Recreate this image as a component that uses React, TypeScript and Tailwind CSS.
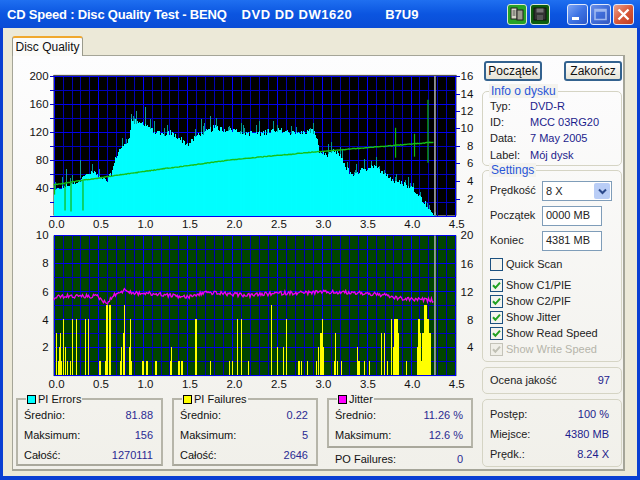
import React from "react";

const lerp = (pts: number[][], g: number) => {
  for (let i = 0; i < pts.length - 1; i++) {
    if (g >= pts[i][0] && g <= pts[i + 1][0]) {
      const t = (g - pts[i][0]) / (pts[i + 1][0] - pts[i][0]);
      return pts[i][1] + (pts[i + 1][1] - pts[i][1]) * t;
    }
  }
  return pts[pts.length - 1][1];
};
let seed = 12345;
const rnd = () => {
  seed = (seed * 1103515245 + 12345) & 0x7fffffff;
  return seed / 0x7fffffff;
};
const X0 = 53;
const PX = 89.6;
const gx = (g: number) => X0 + g * PX;

const env = [
  [0, 36], [0.1, 42], [0.2, 46], [0.3, 50], [0.32, 58], [0.4, 60], [0.45, 65], [0.5, 57], [0.6, 50], [0.65, 62],
  [0.7, 85], [0.75, 98], [0.8, 102], [0.85, 115], [0.87, 138], [0.95, 132], [1.0, 133], [1.05, 130], [1.1, 124],
  [1.2, 116], [1.3, 120], [1.4, 112], [1.5, 103], [1.55, 108], [1.6, 116], [1.7, 120], [1.8, 127], [1.9, 124],
  [2.0, 124], [2.1, 120], [2.3, 118], [2.5, 124], [2.7, 118], [2.9, 122], [2.93, 118], [2.97, 92], [3.05, 88],
  [3.12, 92], [3.2, 88], [3.25, 72], [3.35, 58], [3.45, 66], [3.55, 72], [3.7, 62], [3.8, 50], [3.9, 47], [4.0, 42],
  [4.1, 29], [4.2, 12], [4.26, 0],
];
const cy = (v: number) => 216 - v * 0.7;
let cyanPath = "";
let tealPath = "";
for (let x = 53; x <= 436; x++) {
  const g = (x - X0) / PX;
  const e = lerp(env, g);
  const amp = g > 4.2 ? 0 : g < 0.6 ? 5 : 8;
  const v = Math.max(0, e + (rnd() - 0.55) * amp);
  const r = rnd();
  const s = r > 0.84 ? v + 4 + rnd() * 11 * (g > 4 ? 0.3 : 1) : v;
  if (s > v) tealPath += `M${x + 0.5} ${Math.round(cy(s))}V216`;
  cyanPath += `M${x + 0.5} ${Math.round(cy(v))}V216`;
}
const teal2 = [[0.13, 67], [1.03, 156], [0.3, 79], [1.75, 142], [1.65, 138], [0.93, 150], [0.87, 145]];

const speedPts = [[0.0, 44], [0.3, 50], [1, 63], [2, 80], [3, 92], [4.25, 105]];
const jitterPts = [
  [0, 300], [0.02, 298], [0.1, 297], [0.5, 297], [0.55, 302], [0.6, 303], [0.65, 299], [0.7, 294], [0.8, 291],
  [0.9, 294], [1.0, 294], [1.2, 295], [1.5, 298], [1.7, 293], [2, 295], [2.2, 296], [2.5, 294], [3.0, 293],
  [3.2, 293], [3.5, 294], [3.7, 296], [3.85, 299], [4.0, 300], [4.25, 301],
];
let speedLine = "";
let jitterLine = "";
for (let x = 53; x <= 434; x += 1) {
  const g = (x - X0) / PX;
  speedLine += `${x},${(cy(lerp(speedPts, g)) + (rnd() - 0.5) * 0.6).toFixed(1)} `;
  jitterLine += `${x},${(lerp(jitterPts, g) + (rnd() - 0.5) * 4).toFixed(1)} `;
}

// yellow failure bars: [x, units, width]
const bars: number[][] = [
  [55, 3, 1], [57, 1, 1], [58, 2, 1], [59, 3, 1], [60, 1, 1], [62, 4, 1], [64, 2, 1], [66, 1, 1], [69, 1, 1], [71, 4, 1],
  [75, 4, 1], [85, 4, 1], [88, 4, 1], [99, 1, 2], [105, 1, 1], [106, 5, 2], [109, 5, 2], [120, 1, 1], [121, 2, 1], [123, 3, 1],
  [124, 5, 1], [129, 2, 1], [130, 4, 1], [131, 1, 1], [142, 1, 2], [146, 1, 2], [155, 1, 2], [170, 1, 1], [171, 2, 1],
  [178, 1, 2], [181, 1, 2], [195, 4, 2], [210, 1, 1], [229, 1, 1], [232, 1, 1], [237, 4, 1], [241, 4, 1], [248, 1, 1],
  [271, 5, 1], [277, 2, 1], [283, 2, 1], [286, 4, 1], [298, 1, 1], [299, 1, 1], [301, 1, 1], [307, 1, 1],
  [316, 1, 1], [318, 2, 1], [320, 3, 2], [322, 4, 1], [323, 2, 1], [334, 1, 2], [335, 3, 1], [337, 1, 1], [341, 1, 1],
  [357, 2, 1], [358, 1, 2], [364, 1, 1], [369, 1, 1], [381, 3, 1], [384, 3, 1], [387, 1, 1], [391, 4, 1], [393, 2, 1],
  [394, 4, 4], [398, 3, 1], [406, 1, 1], [417, 2, 1], [418, 4, 1], [419, 3, 1], [420, 4, 1], [421, 3, 1], [417, 1, 8],
  [423, 3, 2], [425, 5, 3], [428, 4, 2], [430, 3, 2],
];

const vMinor: number[] = [];
for (let i = 0; i <= 45; i++) vMinor.push(53 + i * 8.96);

function Grid({ top }: { top: number }) {
  return (
    <g shapeRendering="crispEdges">
      {vMinor.map((x, i) => (
        <line key={i} x1={Math.round(x) + 0.5} x2={Math.round(x) + 0.5} y1={top} y2={top + 140} stroke={i % 5 === 0 ? "#0000ff" : "#0000b4"} strokeWidth={1} />
      ))}
      {Array.from({ length: 11 }).map((_, i) => (
        <line key={i} x1={53} x2={457} y1={top + i * 14 + 0.5} y2={top + i * 14 + 0.5} stroke={i % 2 === 0 ? "#0000f0" : "#0000c0"} strokeWidth={1} />
      ))}
    </g>
  );
}

function XLabels({ y }: { y: number }) {
  const l = ["0.0", "0.5", "1.0", "1.5", "2.0", "2.5", "3.0", "3.5", "4.0", "4.5"];
  return (
    <>
      {l.map((t, i) => (
        <text key={t} x={56 + i * 44.6} y={y} textAnchor="middle" fontSize="11.5" fill="#111">{t}</text>
      ))}
    </>
  );
}

function Charts() {
  const lefts1 = [["200", 76], ["160", 104], ["120", 132], ["80", 160], ["40", 188]];
  const rights1 = [["16", 76], ["14", 94], ["12", 111], ["10", 128], ["8", 146], ["6", 163], ["4", 181], ["2", 199]];
  const lefts2 = [["10", 236], ["8", 264], ["6", 293], ["4", 321], ["2", 348]];
  const rights2 = [["20", 236], ["16", 265], ["12", 293], ["8", 321], ["4", 348]];
  const T = (a: (string | number)[][], x: number, anchor: "end" | "start") =>
    a.map(([t, y]) => (
      <text key={String(t)} x={x} y={Number(y) + 4} textAnchor={anchor} fontSize="11.5" fill="#111">{t}</text>
    ));
  return (
    <svg className="block" width={469} height={343} viewBox="13 56 469 343">
      <rect x={53} y={75} width={404} height={141} fill="#000" />
      <line x1={53} x2={457} y1={75.5} y2={75.5} stroke="#555" />
      <Grid top={76} />
      <path d={tealPath} stroke="#009a9a" strokeWidth={1} fill="none" shapeRendering="crispEdges" />
      {teal2.map(([g, v], i) => (
        <line key={i} x1={Math.round(gx(g)) + 0.5} x2={Math.round(gx(g)) + 0.5} y1={cy(v)} y2={cy(v - 25)} stroke="#149c9c" shapeRendering="crispEdges" />
      ))}
      <path d={cyanPath} stroke="#00ffff" strokeWidth={1} fill="none" shapeRendering="crispEdges" />
      <line x1={435.5} x2={435.5} y1={76} y2={216} stroke="#b4b4b4" strokeWidth={1.5} />
      <polyline points={speedLine} fill="none" stroke="#16c016" strokeWidth={1.4} />
      <g stroke="#0fb80f" strokeWidth={1.2}>
        <line x1={54} x2={54} y1={186} y2={195} />
        <line x1={64.5} x2={64.5} y1={184} y2={211} />
        <line x1={70.5} x2={70.5} y1={183} y2={212} />
        <line x1={82.5} x2={82.5} y1={181} y2={211} />
        <line x1={396} x2={396} y1={128} y2={158} />
        <line x1={415} x2={415} y1={134} y2={157} />
        <line x1={428.5} x2={428.5} y1={100} y2={163} />
      </g>
      <g stroke="#0000d0" shapeRendering="crispEdges">
        {Array.from({ length: 11 }).map((_, i) => (
          <line key={i} x1={49} x2={53} y1={76 + i * 14 + 0.5} y2={76 + i * 14 + 0.5} />
        ))}
        {[76, 94, 111, 128, 146, 163, 181, 199].map((y) => (
          <line key={y} x1={457} x2={461} y1={y + 0.5} y2={y + 0.5} />
        ))}
      </g>
      {T(lefts1, 48, "end")}
      {T(rights1, 474, "end")}
      <XLabels y={229} />

      <rect x={53} y={236} width={404} height={141} fill="#004400" />
      <Grid top={236} />
      <g fill="#ffff00" shapeRendering="crispEdges">
        {bars.map(([x, u, w], i) => (
          <rect key={i} x={x} y={376 - u * 14} width={w} height={u * 14} />
        ))}
      </g>
      <line x1={435.5} x2={435.5} y1={236} y2={376} stroke="#b4b4b4" strokeWidth={1.5} />
      <polyline points={jitterLine} fill="none" stroke="#f000f0" strokeWidth={1.3} />
      {T(lefts2, 48, "end")}
      {T(rights2, 474, "end")}
      <XLabels y={389} />
    </svg>
  );
}

function Stat({ label, value, h = "h-[20px]" }: { label: string; value: string; h?: string }) {
  return (
    <div className={`flex ${h} items-center justify-between`}>
      <span className="text-[#111]">{label}</span>
      <span className="text-[#2a2a92]">{value}</span>
    </div>
  );
}

function StatGroup({ title, color, width, height, rows }: { title: string; color: string; width: string; height: string; rows: string[][] }) {
  return (
    <div className={`relative ${width} ${height} border-2 border-[#b6b5a9] border-b-[#a9a89c] pl-[6px] pr-[8px] pt-[5px]`}>
      <div className="absolute left-[8px] top-[-8px] flex h-[14px] items-center gap-[2px] bg-[#f3f2ec] pl-[1px] pr-[1px] text-[#111]">
        <span className={`h-[9px] w-[9px] border border-black ${color}`} />
        {title}
      </div>
      {rows.map(([l, v]) => (
        <Stat key={l} label={l} value={v} />
      ))}
    </div>
  );
}

function Check({ label, disabled }: { label: string; disabled?: boolean }) {
  return (
    <div className="flex h-[16px] items-center gap-[3px]">
      <span className={`flex h-[13px] w-[13px] items-center justify-center border ${disabled ? "border-[#c4c3b8] bg-[#f0efe8]" : "border-[#1c5180] bg-[#f4f4ee]"}`}>
        <svg width="9" height="9" viewBox="0 0 9 9">
          <path d="M1 4.2 L3.4 6.8 L8 1.6" fill="none" stroke={disabled ? "#c0c0b4" : "#21a121"} strokeWidth="2" />
        </svg>
      </span>
      <span className={disabled ? "text-[#b5b4aa]" : "text-[#222]"}>{label}</span>
    </div>
  );
}

function RGroup({ title, height, className = "", children }: { title?: string; height: string; className?: string; children: React.ReactNode }) {
  return (
    <div className={`relative ${height} rounded-[5px] border border-[#d5d4c4] px-[7px] ${className}`}>
      {title && (
        <div className="absolute left-[6px] top-[-8px] bg-[#f4f3ee] px-[2px] text-[12px] leading-[14px] text-[#2a56d8]">{title}</div>
      )}
      {children}
    </div>
  );
}

function XPBtn({ label }: { label: string }) {
  return (
    <button className="flex h-[20px] w-[58px] items-center justify-center rounded-[3px] border-2 border-[#33628f] bg-gradient-to-b from-[#ffffff] to-[#e6e3d6] text-[12px] text-[#111]">
      {label}
    </button>
  );
}

function Field({ label, value, wide }: { label: string; value: string; wide?: boolean }) {
  return (
    <div className="flex h-[25px] items-center">
      <span className="w-[52px] text-[#222]">{label}</span>
      <div className={`flex h-[20px] ${wide ? "w-[70px]" : "w-[60px]"} items-center border border-[#7f9db9] bg-white pl-[3px] text-[#222]`}>{value}</div>
    </div>
  );
}

function TitleButton({ kind }: { kind: "min" | "max" | "close" }) {
  const bg = kind === "close" ? "bg-gradient-to-br from-[#e9a08c] via-[#d8593a] to-[#c03c20]" : kind === "min" ? "bg-gradient-to-br from-[#7ea4f4] via-[#3f74e4] to-[#2a56c8]" : "bg-gradient-to-br from-[#6a90e8] via-[#3f6cd8] to-[#3458c0]";
  return (
    <div className={`flex h-[21px] w-[21px] items-center justify-center rounded-[3px] border border-[#dfe8fb] ${bg}`}>
      <svg width="15" height="15" viewBox="0 0 15 15">
        {kind === "min" && <rect x="2" y="10" width="7" height="3" fill="#fff" />}
        {kind === "max" && <path d="M2 2.5h11v10H2z M2 4h11" fill="none" stroke="#9fb8ef" strokeWidth="1.6" />}
        {kind === "close" && <path d="M2.5 2.5 L12.5 12.5 M12.5 2.5 L2.5 12.5" stroke="#fff" strokeWidth="2.4" />}
      </svg>
    </div>
  );
}

function GreenBtn({ kind }: { kind: "copy" | "save" }) {
  return (
    <div className={`flex h-[21px] w-[20px] items-center justify-center rounded-[3px] border border-[#d6e8d6] ${kind === "copy" ? "bg-[#27a327]" : "bg-[#0d5e0d]"}`}>
      <svg width="14" height="14" viewBox="0 0 14 14">
        {kind === "copy" ? (
          <>
            <rect x="1" y="1" width="6" height="11" fill="#d6d6c6" stroke="#222" />
            <rect x="7" y="3" width="6" height="10" fill="#9a9a8c" stroke="#222" />
            <path d="M2.5 4h3M2.5 6h3M2.5 8h3" stroke="#444" />
          </>
        ) : (
          <>
            <rect x="1" y="1" width="12" height="12" fill="#333" stroke="#111" />
            <rect x="3.5" y="1.5" width="7" height="4" fill="#777" />
            <rect x="4" y="8" width="6" height="5" fill="#555" />
          </>
        )}
      </svg>
    </div>
  );
}

export default function App() {
  return (
    <div className="flex h-[480px] w-[640px] flex-col overflow-hidden bg-[#0a3fd2] font-['Liberation_Sans',sans-serif] text-[11px] leading-none">
      <div className="flex h-[28px] shrink-0 items-center bg-gradient-to-b from-[#1f6ff0] via-[#0b55e0] to-[#0a4cd6] pl-[7px] pr-[6px] text-[13px] font-bold text-white">
        <span className="tracking-[-0.2px]">CD Speed : Disc Quality Test - BENQ</span>
        <span className="ml-[15px] tracking-[0.5px]">DVD DD DW1620</span>
        <span className="ml-[33px]">B7U9</span>
        <div className="ml-auto flex gap-[3px]">
          <GreenBtn kind="copy" />
          <GreenBtn kind="save" />
        </div>
        <div className="ml-[17px] flex gap-[2px]">
          <TitleButton kind="min" />
          <TitleButton kind="max" />
          <TitleButton kind="close" />
        </div>
      </div>
      <div className="mx-[3px] mb-[4px] flex flex-1 flex-col bg-[#ece9d8] px-[9px] pt-[8px]">
        <div className="relative z-10 flex h-[20px] w-[71px] items-center justify-center rounded-t-[3px] border-x border-[#9a9a8c] border-t-2 border-t-[#f0a82e] bg-[#fbfbf9] text-[12px] text-[#111]">
          Disc Quality
        </div>
        <div className="mt-[-1px] flex h-[416px] w-[613px] border border-[#a5a598] border-b-2 border-r-2 bg-gradient-to-b from-[#fdfdfe] to-[#f1f0ea]">
          <div className="flex w-[469px] shrink-0 flex-col">
            <Charts />
            <div className="flex pl-[3px]">
              <StatGroup title="PI Errors" color="bg-[#00ffff]" width="w-[147px]" height="h-[68px]" rows={[["Średnio:", "81.88"], ["Maksimum:", "156"], ["Całość:", "1270111"]]} />
              <StatGroup title="PI Failures" color="bg-[#ffff00]" width="ml-[9px] w-[146px]" height="h-[68px]" rows={[["Średnio:", "0.22"], ["Maksimum:", "5"], ["Całość:", "2646"]]} />
              <div className="ml-[9px] w-[146px]">
                <StatGroup title="Jitter" color="bg-[#ff00ff]" width="w-[146px]" height="h-[50px]" rows={[["Średnio:", "11.26 %"], ["Maksimum:", "12.6 %"]]} />
                <div className="pl-[8px] pr-[10px] pt-[1px]">
                  <Stat label="PO Failures:" value="0" />
                </div>
              </div>
            </div>
          </div>
          <div className="flex w-[140px] flex-col pt-[5px]">
            <div className="flex justify-between pl-[2px]">
              <XPBtn label="Początek" />
              <XPBtn label="Zakończ" />
            </div>
            <RGroup title="Info o dysku" height="h-[75px]" className="mt-[10px] pt-[6px]">
              {[["Typ:", "DVD-R"], ["ID:", "MCC 03RG20"], ["Data:", "7 May 2005"], ["Label:", "Mój dysk"]].map(([l, v]) => (
                <div key={l} className="flex h-[16.3px] items-center">
                  <span className="w-[40px] text-[#222]">{l}</span>
                  <span className="text-[#1c1c8c]">{v}</span>
                </div>
              ))}
            </RGroup>
            <RGroup title="Settings" height="h-[192px]" className="mt-[4px] pt-[7px]">
              <Field label="Prędkość" value="" wide />
              <Field label="Początek" value="0000 MB" />
              <Field label="Koniec" value="4381 MB" />
              <div className="mt-[3px] flex h-[16px] items-center gap-[3px]">
                <span className="h-[13px] w-[13px] border border-[#1c5180] bg-[#f4f4ee]" />
                <span className="text-[#222]">Quick Scan</span>
              </div>
              <div className="mt-[5px]">
                <Check label="Show C1/PIE" />
                <Check label="Show C2/PIF" />
                <Check label="Show Jitter" />
                <Check label="Show Read Speed" />
                <Check label="Show Write Speed" disabled />
              </div>
              <div className="absolute left-[59px] top-[10px] flex h-[20px] w-[70px] items-center border border-[#7f9db9] bg-white pl-[3px] text-[#222]">
                8 X
                <span className="absolute right-[1px] top-[1px] flex h-[16px] w-[16px] items-center justify-center rounded-[2px] bg-[#b9cdf6]">
                  <svg width="9" height="7" viewBox="0 0 9 7"><path d="M1 1.5 L4.5 5 L8 1.5" fill="none" stroke="#2c4a8c" strokeWidth="2" /></svg>
                </span>
              </div>
            </RGroup>
            <RGroup height="h-[27px]" className="mt-[5px] flex items-center justify-between">
              <span className="text-[#222]">Ocena jakość</span>
              <span className="pr-[4px] text-[#1c1c8c]">97</span>
            </RGroup>
            <RGroup height="h-[68px]" className="mt-[5px] pt-[4px]">
              {[["Postęp:", "100 %"], ["Miejsce:", "4380 MB"], ["Prędk.:", "8.24 X"]].map(([l, v]) => (
                <div key={l} className="flex h-[20px] items-center justify-between pr-[5px]">
                  <span className="text-[#222]">{l}</span>
                  <span className="text-[#1c1c8c]">{v}</span>
                </div>
              ))}
            </RGroup>
          </div>
        </div>
      </div>
    </div>
  );
}
